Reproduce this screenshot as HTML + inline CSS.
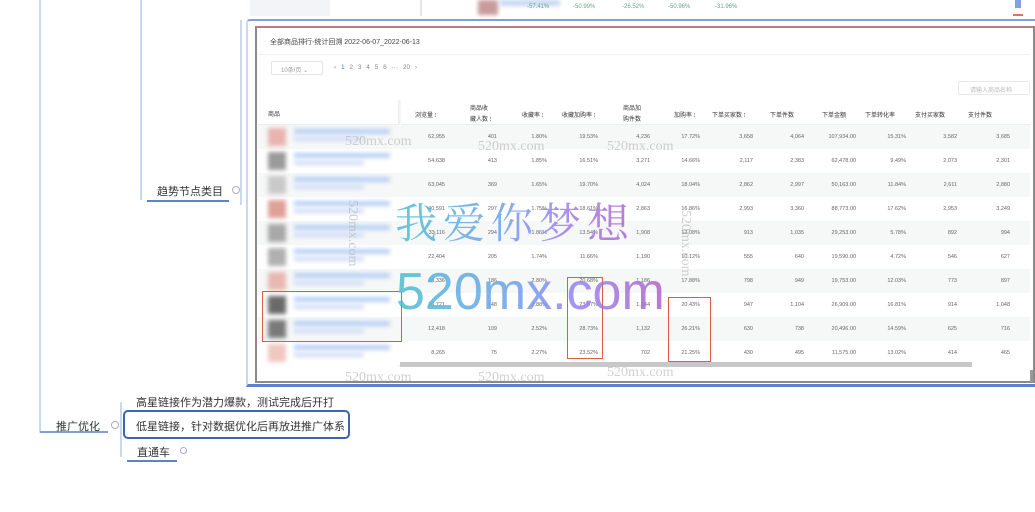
<!DOCTYPE html>
<html><head><meta charset="utf-8"><style>
*{margin:0;padding:0;box-sizing:border-box}
body{width:1035px;height:512px;overflow:hidden;background:#fff;position:relative;font-family:"Liberation Sans","Noto Sans CJK SC",sans-serif;color:#333}
.a{position:absolute}
.t{font-size:6px;color:#666;white-space:nowrap}
.n{position:absolute;font-size:5.5px;color:#666;text-align:right;width:50px;white-space:nowrap}
.row{position:absolute;left:258px;width:772px;height:24px}
.wm{position:absolute;font-family:"Liberation Serif",serif;color:rgba(170,170,170,.55);font-size:14px;white-space:nowrap}
.grad{background:linear-gradient(90deg,#4bbfd0,#6fa0ee 45%,#9b7ef0 70%,#b064c8);-webkit-background-clip:text;background-clip:text;color:transparent;opacity:.85}
.mm{font-size:11px;color:#333;white-space:nowrap}
.blur{filter:blur(2px)}
</style></head><body>
<!-- mind map lines -->
<div class="a" style="left:39px;top:0;width:2px;height:433px;background:#c8d8ee"></div>
<div class="a" style="left:40px;top:431px;width:68px;height:2px;background:#7ea1d6"></div>
<div class="a" style="left:140px;top:0;width:2px;height:200px;background:#c8d8ee"></div>
<div class="a" style="left:147px;top:200px;width:82px;height:2px;background:#5b84c8"></div>
<div class="a mm" style="left:157px;top:183px">趋势节点类目</div>
<div class="a" style="left:232px;top:186px;width:8px;height:8px;border:1px solid #aac;border-radius:50%"></div>
<div class="a" style="left:240px;top:20px;width:2px;height:185px;background:#c8d8ee"></div>
<div class="a mm" style="left:56px;top:418px">推广优化</div>
<div class="a" style="left:111px;top:421px;width:8px;height:8px;border:1px solid #aac;border-radius:50%"></div>
<div class="a" style="left:120px;top:402px;width:2px;height:55px;background:#c8d8ee;border-radius:2px"></div>
<div class="a mm" style="left:136px;top:394px">高星链接作为潜力爆款，测试完成后开打</div>
<div class="a" style="left:123px;top:410px;width:227px;height:29px;border:2px solid #3d64b0;border-radius:5px"></div>
<div class="a mm" style="left:136px;top:418px">低星链接，针对数据优化后再放进推广体系</div>
<div class="a mm" style="left:137px;top:444px">直通车</div>
<div class="a" style="left:127px;top:460px;width:50px;height:2px;background:#5b84c8"></div>
<div class="a" style="left:180px;top:447px;width:7px;height:7px;border:1px solid #aac;border-radius:50%"></div>
<!-- top background screenshot strip -->
<div class="a" style="left:250px;top:0;width:80px;height:16px;background:#f2f4f7"></div>
<div class="a" style="left:420px;top:0;width:2px;height:16px;background:#e6e6e6"></div>
<div class="a blur" style="left:478px;top:0;width:20px;height:15px;background:#c89a9a"></div>
<div class="a blur" style="left:500px;top:0;width:60px;height:6px;background:#c5d5f2"></div>
<div class="a t" style="left:525px;top:10px;width:0"></div>
<div class="a t" style="left:527px;top:4px;color:#6a8">-57.41%</div>
<div class="a t" style="left:573px;top:4px;color:#6a8">-50.99%</div>
<div class="a t" style="left:622px;top:4px;color:#6a8">-26.52%</div>
<div class="a t" style="left:668px;top:4px;color:#6a8">-50.96%</div>
<div class="a t" style="left:715px;top:4px;color:#6a8">-31.96%</div>
<div class="a" style="left:1015px;top:0;width:6px;height:8px;background:#7ea1e0"></div>
<div class="a" style="left:1013px;top:14px;width:10px;height:2px;background:#e07060"></div>
<!-- panel -->
<div class="a" style="left:246px;top:19px;width:789px;height:368px;border-top:2px solid #7ea1d6;border-left:2px solid #c8d8ee;border-bottom:3px solid #5b84c8;border-radius:4px 0 0 0"></div>
<div class="a" style="left:255px;top:26px;width:780px;height:357px;border:2px solid #8a8a8a;border-top:2px solid #b38080;background:#fff"></div>
<div class="a t" style="left:270px;top:37px;font-size:7px;color:#444">全部商品排行-统计回溯 2022-06-07_2022-06-13</div>
<div class="a" style="left:258px;top:54px;width:772px;height:1px;background:#f0f0f0"></div>
<div class="a" style="left:271px;top:61px;width:52px;height:14px;border:1px solid #e4e4e4;border-radius:2px"></div>
<div class="a t" style="left:281px;top:65px;color:#999">10条/页 ⌄</div>
<div class="a t" style="left:334px;top:64px;color:#888;font-size:6.5px;word-spacing:3px">‹ <span style="color:#3a7bd5">1</span> 2 3 4 5 6 ··· 20 ›</div>
<div class="a" style="left:958px;top:81px;width:72px;height:14px;border:1px solid #e8e8e8;border-radius:2px"></div>
<div class="a t" style="left:970px;top:85px;color:#bbb">请输入商品名称</div>
<!-- header -->
<div class="a t" style="left:268px;top:109px;color:#333">商品</div>
<div class="a t" style="left:415px;top:110px;color:#333">浏览量 ⁝</div>
<div class="a t" style="left:470px;top:104px;color:#333;line-height:11px">商品收<br>藏人数 ⁝</div>
<div class="a t" style="left:522px;top:110px;color:#333">收藏率 ⁝</div>
<div class="a t" style="left:562px;top:110px;color:#333">收藏加购率 ⁝</div>
<div class="a t" style="left:623px;top:104px;color:#333;line-height:11px">商品加<br>购件数</div>
<div class="a t" style="left:674px;top:110px;color:#333">加购率 ⁝</div>
<div class="a t" style="left:712px;top:110px;color:#333">下单买家数 ⁝</div>
<div class="a t" style="left:770px;top:110px;color:#333">下单件数</div>
<div class="a t" style="left:822px;top:110px;color:#333">下单金额</div>
<div class="a t" style="left:865px;top:110px;color:#333">下单转化率</div>
<div class="a t" style="left:915px;top:110px;color:#333">支付买家数</div>
<div class="a t" style="left:968px;top:110px;color:#333">支付件数</div>
<div class="a" style="left:258px;top:124px;width:772px;height:1px;background:#eee"></div>
<div class="a" style="left:398px;top:100px;width:4px;height:266px;background:linear-gradient(90deg,#ececec,#fff)"></div>

<div id="rows"></div>
<script>
var d=[["62,955","401","1.80%","19.53%","4,236","17.72%","3,658","4,064","107,934.00","15.31%","3,582","3,685"],
["54,638","413","1.85%","16.51%","3,271","14.66%","2,117","2,383","62,478.00","9.49%","2,073","2,301"],
["63,045","369","1.65%","19.70%","4,024","18.04%","2,862","2,997","50,163.00","11.84%","2,611","2,880"],
["40,591","297","1.75%","18.61%","2,863","16.86%","2,993","3,360","88,773.00","17.62%","2,953","3,249"],
["33,116","294","1.86%","13.54%","1,908","12.08%","913","1,035","29,253.00","5.78%","892","994"],
["22,404","205","1.74%","11.66%","1,190","10.12%","555","640","19,590.00","4.72%","546","627"],
["18,336","186","2.80%","20.68%","1,186","17.88%","798","949","19,753.00","12.03%","773","897"],
["16,721","148","2.88%","23.67%","1,144","20.43%","947","1,104","26,909.00","16.81%","914","1,048"],
["12,418","109","2.52%","28.73%","1,132","26.21%","630","738","20,496.00","14.59%","625","716"],
["8,265","75","2.27%","23.52%","702","21.25%","430","495","11,575.00","13.02%","414","465"]];
var ends=[445,497,547,598,650,700,753,804,856,906,957,1010];
var th=["#e8b4b0","#9a9a9a","#c9c9c9","#e0a098","#a8a8a8","#b0b0b0","#e8b8b0","#6a6a6a","#7a7a7a","#f0c8c0"];
var h="";
for(var i=0;i<10;i++){var y=125+i*24;
h+='<div class="row" style="top:'+y+'px;background:'+(i%2==0?'#f6f7f7':'#fff')+'"></div>';
h+='<div class="a blur" style="left:268px;top:'+(y+3)+'px;width:18px;height:18px;background:'+th[i]+'"></div>';
h+='<div class="a blur" style="left:294px;top:'+(y+4)+'px;width:96px;height:5px;background:#b8cff5"></div>';
h+='<div class="a blur" style="left:294px;top:'+(y+12)+'px;width:70px;height:4px;background:#cddcf7"></div>';
for(var j=0;j<12;j++)h+='<div class="n" style="left:'+(ends[j]-50)+'px;top:'+(y+9)+'px">'+d[i][j]+'</div>';}
document.getElementById('rows').innerHTML=h;
</script>
<div class="a" style="left:400px;top:362px;width:572px;height:5px;background:#c8c8c8"></div>
<div class="a" style="left:1030px;top:370px;width:3px;height:12px;background:#999"></div>
<!-- red boxes -->
<div class="a" style="left:262px;top:291px;width:140px;height:51px;border:1.5px solid #e05a44"></div>
<div class="a" style="left:567px;top:277px;width:36px;height:82px;border:1.5px solid #e05a44"></div>
<div class="a" style="left:668px;top:297px;width:43px;height:65px;border:1.5px solid #e05a44"></div>
<!-- watermarks -->
<div class="wm" style="left:345px;top:134px">520mx.com</div>
<div class="wm" style="left:478px;top:139px">520mx.com</div>
<div class="wm" style="left:607px;top:139px">520mx.com</div>
<div class="wm" style="left:345px;top:370px">520mx.com</div>
<div class="wm" style="left:478px;top:370px">520mx.com</div>
<div class="wm" style="left:607px;top:365px">520mx.com</div>
<div class="wm" style="left:302px;top:255px;transform:rotate(90deg);transform-origin:0 0;left:360px;top:200px">520mx.com</div>
<div class="wm" style="left:693px;top:210px;transform:rotate(90deg);transform-origin:0 0">520mx.com</div>
<div class="a grad" style="left:395px;top:196px;font-family:'Noto Serif CJK SC',serif;font-size:42px;line-height:50px;letter-spacing:6px;white-space:nowrap">我爱你梦想</div>
<div class="a grad" style="left:396px;top:262px;font-size:52px;line-height:60px;white-space:nowrap">520mx.com</div>
</body></html>
